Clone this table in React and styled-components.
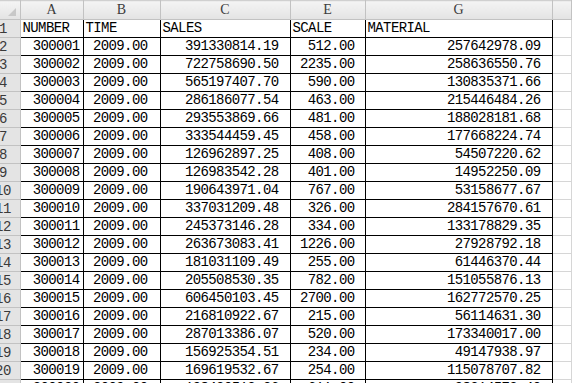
import styled, { createGlobalStyle } from "styled-components";

const GlobalStyle = createGlobalStyle`
  html, body { margin: 0; padding: 0; background: #fff; overflow: hidden; }
  body { width: 572px; height: 383px; }
`;

const columns = [
  { key: "A", width: 63, label: "NUMBER", pad: 3 },
  { key: "B", width: 77, label: "TIME", pad: 12 },
  { key: "C", width: 130, label: "SALES", pad: 11 },
  { key: "E", width: 75, label: "SCALE", pad: 10 },
  { key: "G", width: 187, label: "MATERIAL", pad: 11 },
];

const rows = [
  ["300001", "391330814.19", "512.00", "257642978.09"],
  ["300002", "722758690.50", "2235.00", "258636550.76"],
  ["300003", "565197407.70", "590.00", "130835371.66"],
  ["300004", "286186077.54", "463.00", "215446484.26"],
  ["300005", "293553869.66", "481.00", "188028181.68"],
  ["300006", "333544459.45", "458.00", "177668224.74"],
  ["300007", "126962897.25", "408.00", "54507220.62"],
  ["300008", "126983542.28", "401.00", "14952250.09"],
  ["300009", "190643971.04", "767.00", "53158677.67"],
  ["300010", "337031209.48", "326.00", "284157670.61"],
  ["300011", "245373146.28", "334.00", "133178829.35"],
  ["300012", "263673083.41", "1226.00", "27928792.18"],
  ["300013", "181031109.49", "255.00", "61446370.44"],
  ["300014", "205508530.35", "782.00", "151055876.13"],
  ["300015", "606450103.45", "2700.00", "162772570.25"],
  ["300016", "216810922.67", "215.00", "56114631.30"],
  ["300017", "287013386.07", "520.00", "173340017.00"],
  ["300018", "156925354.51", "234.00", "49147938.97"],
  ["300019", "169619532.67", "254.00", "115078707.82"],
  ["300020", "198430512.36", "611.00", "98214573.40"],
];

const Sheet = styled.table`
  border-collapse: collapse;
  table-layout: fixed;
  width: 572px;
  font-family: "Liberation Mono", "DejaVu Sans Mono", monospace;
  font-size: 14px;
  letter-spacing: -0.6px;
  color: #000;
`;

const HeadCell = styled.th`
  height: 18px;
  padding: 0;
  background: linear-gradient(#f4f4f4, #e3e3e3);
  border: 1px solid #c2c2c2;
  border-top-color: #d0d0d0;
  font-family: "Liberation Serif", "DejaVu Serif", serif;
  font-weight: normal;
  font-size: 14px;
  letter-spacing: 0;
  color: #3c3c3c;
  text-align: center;
`;

const Corner = styled(HeadCell)`
  position: relative;
  border-left: none;
`;

const Triangle = styled.span`
  position: absolute;
  right: 4px;
  bottom: 3px;
  width: 0;
  height: 0;
  border-left: 8px solid transparent;
  border-bottom: 8px solid #c8c8c8;
`;

const RowHead = styled.th`
  height: 17px;
  padding: 0;
  background: #e4e4e4;
  border: 1px solid #c2c2c2;
  border-left: none;
  font-weight: normal;
  color: #3a3a3a;
  letter-spacing: -0.4px;
  overflow: hidden;
  text-align: left;
`;

const RowNum = styled.div`
  width: 16px;
  margin-left: -5px;
  text-align: center;
  white-space: nowrap;
`;

const Cell = styled.td`
  height: 17px;
  padding: 0 ${(p) => (p.$right ? `${p.$pad}px` : "0")} 0 ${(p) => (p.$right ? "0" : "2px")};
  border: 1px solid #000;
  text-align: ${(p) => (p.$right ? "right" : "left")};
  white-space: nowrap;
  overflow: hidden;
  line-height: 17px;
`;

const Blank = styled.td`
  padding: 0;
  border: 1px solid #d6d6d6;
  border-left-color: #000;
  background: #fff;
`;

const App = () => (
  <>
    <GlobalStyle />
    <Sheet>
      <colgroup>
        <col style={{ width: 20 }} />
        {columns.map((c) => (
          <col key={c.key} style={{ width: c.width }} />
        ))}
        <col />
      </colgroup>
      <thead>
        <tr>
          <Corner>
            <Triangle />
          </Corner>
          {columns.map((c) => (
            <HeadCell key={c.key}>{c.key}</HeadCell>
          ))}
          <HeadCell />
        </tr>
      </thead>
      <tbody>
        <tr>
          <RowHead>
            <RowNum>1</RowNum>
          </RowHead>
          {columns.map((c) => (
            <Cell key={c.key}>{c.label}</Cell>
          ))}
          <Blank />
        </tr>
        {rows.map((r, i) => {
          const values = [r[0], "2009.00", r[1], r[2], r[3]];
          return (
            <tr key={r[0]}>
              <RowHead>
                <RowNum>{i + 2}</RowNum>
              </RowHead>
              {values.map((v, j) => (
                <Cell key={columns[j].key} $right $pad={columns[j].pad}>
                  {v}
                </Cell>
              ))}
              <Blank />
            </tr>
          );
        })}
      </tbody>
    </Sheet>
  </>
);

export default App;
